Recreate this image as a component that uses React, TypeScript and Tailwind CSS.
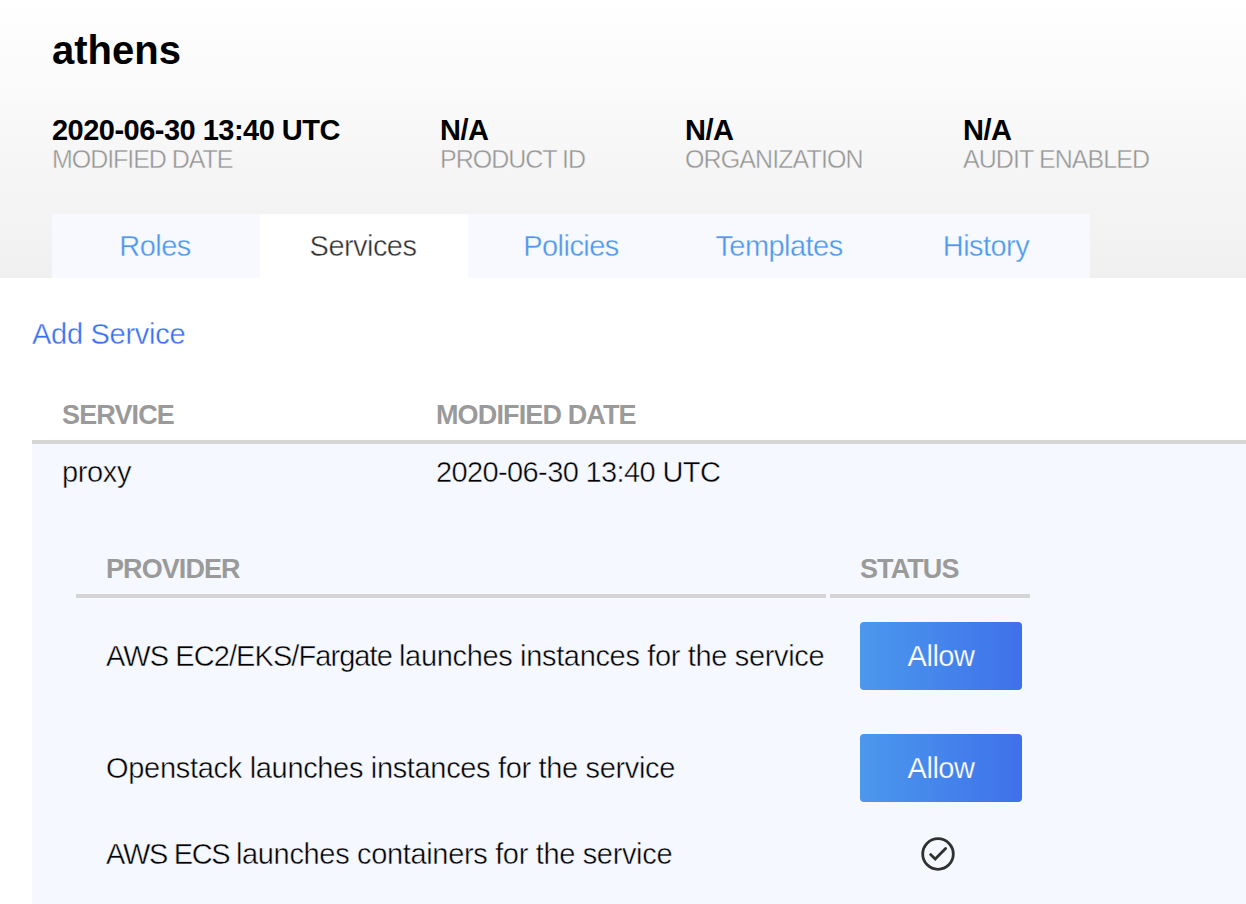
const details = [
  { value: "2020-06-30 13:40 UTC", label: "MODIFIED DATE", width: "w-[388px]", tracking: "tracking-[-1.05px]" },
  { value: "N/A", label: "PRODUCT ID", width: "w-[245px]", tracking: "tracking-[-1px]" },
  { value: "N/A", label: "ORGANIZATION", width: "w-[278px]", tracking: "tracking-[-0.9px]" },
  { value: "N/A", label: "AUDIT ENABLED", width: "w-[240px]", tracking: "tracking-[-0.93px]" },
];

const tabs = ["Roles", "Services", "Policies", "Templates", "History"];

const providers = [
  { vendor: "AWS EC2/EKS/Fargate", action: "launches instances for the service", tracking: "tracking-[-0.93px]", allowed: false },
  { vendor: "Openstack", action: "launches instances for the service", tracking: "tracking-[-0.3px]", allowed: false },
  { vendor: "AWS ECS", action: "launches containers for the service", tracking: "tracking-[-1.35px]", allowed: true },
];

function CheckCircle() {
  return (
    <svg width="36" height="36" viewBox="0 0 36 36" fill="none" stroke="#303030" strokeWidth="2.8">
      <circle cx="18" cy="18" r="15.3" />
      <path d="M10.6 18.6 L15.2 23 L25.6 12.6" strokeLinejoin="miter" strokeLinecap="round" />
    </svg>
  );
}

function Header() {
  return (
    <header className="h-[278px] bg-gradient-to-b from-white to-[#f0f0f0] px-[52px] pt-[26px]">
      <h1 className="text-[40px] leading-[48px] font-bold">athens</h1>
      <dl className="mt-[41px] flex">
        {details.map((d) => (
          <div key={d.label} className={`${d.width} shrink-0`}>
            <dd className="text-[29px] leading-[30px] font-bold tracking-[-0.52px]">{d.value}</dd>
            <dt className={`text-[25px] leading-[28px] text-[#959595] [-webkit-text-stroke:0.4px_#f7f7f7] ${d.tracking}`}>
              {d.label}
            </dt>
          </div>
        ))}
      </dl>
      <nav className="mt-[41px] grid w-[1038px] grid-cols-[repeat(4,208px)_206px] bg-[#f7f9ff] text-center text-[29px] leading-[64px] tracking-[-0.55px]">
        {tabs.map((tab) => (
          <a
            key={tab}
            className={
              tab === "Services"
                ? "rounded-t-[3px] bg-white pr-0.5 text-[#303030] [-webkit-text-stroke:0.45px_#ffffff]"
                : "pr-0.5 text-[#4c98ec] [-webkit-text-stroke:0.35px_#f7f9ff]"
            }
          >
            {tab}
          </a>
        ))}
      </nav>
    </header>
  );
}

function ProviderTable() {
  return (
    <div className="mt-[44px] ml-[44px] w-[954px]">
      <div className="flex gap-1 text-[27px] leading-[50px] font-bold tracking-[-0.92px] text-[#9a9a9a]">
        <div className="w-[750px] border-b-4 border-[#d5d5d5] pl-[30px]">PROVIDER</div>
        <div className="w-[200px] border-b-4 border-[#d5d5d5] pl-[30px]">STATUS</div>
      </div>
      <div className="mt-0.5">
        {providers.map((p) => (
          <div key={p.vendor} className={`flex items-center ${p.allowed ? "h-[60px]" : "h-[112px]"}`}>
            <div className="w-[754px] pl-[30px] text-[29px] leading-8 tracking-[-0.34px] whitespace-nowrap [-webkit-text-stroke:0.45px_#f5f8ff]">
              <span className={p.tracking}>{p.vendor} </span>
              {p.action}
            </div>
            <div className="pl-[30px]">
              {p.allowed ? (
                <div className="flex w-[156px] justify-center">
                  <CheckCircle />
                </div>
              ) : (
                <button className="h-[68px] w-[162px] rounded-[4px] bg-gradient-to-r from-[#4c98ec] to-[#3f70ea] text-[29px] leading-[68px] tracking-[-0.5px] text-white [-webkit-text-stroke:0.25px_#4785eb]">
                  Allow
                </button>
              )}
            </div>
          </div>
        ))}
      </div>
    </div>
  );
}

export default function App() {
  return (
    <div className="h-[904px] w-[1246px] overflow-hidden bg-white font-['Liberation_Sans',Arial,sans-serif] text-black">
      <Header />
      <main className="pt-10 pl-8">
        <a className="block text-[29px] leading-8 tracking-[-0.28px] text-[#3b70f0] [-webkit-text-stroke:0.35px_#ffffff]">
          Add Service
        </a>
        <div className="mt-10 flex border-b-4 border-[#d5d5d5] pl-[30px] text-[27px] leading-[50px] font-bold tracking-[-0.87px] text-[#9a9a9a]">
          <div className="w-[374px]">SERVICE</div>
          <div>MODIFIED DATE</div>
        </div>
        <div className="h-[460px] bg-[#f5f8ff]">
          <div className="flex pl-[30px] text-[29px] leading-[56px] [-webkit-text-stroke:0.45px_#f5f8ff]">
            <div className="w-[374px] tracking-[-0.35px]">proxy</div>
            <div className="tracking-[-0.62px]">2020-06-30 13:40 UTC</div>
          </div>
          <ProviderTable />
        </div>
      </main>
    </div>
  );
}
